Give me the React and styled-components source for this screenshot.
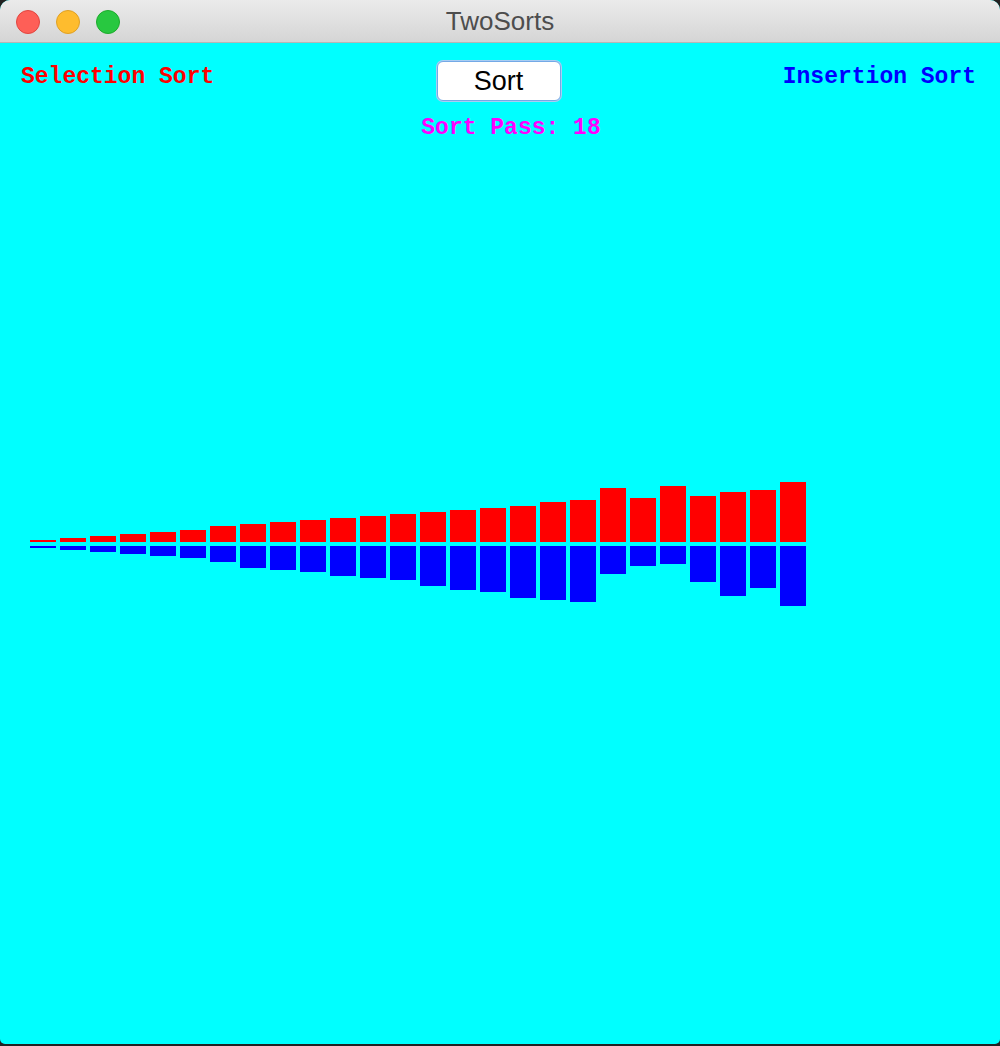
import React from "react";
import styled, { createGlobalStyle } from "styled-components";

const GlobalStyle = createGlobalStyle`
  html, body { margin: 0; padding: 0; background: #222222; }
  body { width: 1000px; height: 1046px; overflow: hidden; }
  #root { width: 1000px; height: 1046px; }
`;

const Window = styled.div`
  width: 1000px;
  height: 1044px;
  display: flex;
  flex-direction: column;
  border-radius: 10px 10px 5px 5px;
  overflow: hidden;
  background: #00ffff;
`;

const TitleBar = styled.div`
  height: 42px;
  border-bottom: 1px solid #b6b6b6;
  background: linear-gradient(#ebebeb, #d5d5d5);
  display: grid;
  grid-template-columns: 1fr auto 1fr;
  align-items: center;
`;

const Lights = styled.div`
  display: flex;
  gap: 16px;
  padding-left: 16px;
`;

const Light = styled.span`
  width: 24px;
  height: 24px;
  box-sizing: border-box;
  border-radius: 50%;
  background: ${(p) => p.$fill};
  border: 1px solid ${(p) => p.$edge};
`;

const Title = styled.div`
  font-family: "Liberation Sans", Arial, sans-serif;
  font-size: 26px;
  line-height: 42px;
  padding-bottom: 1px;
  color: #4d4d4d;
`;

const Content = styled.div`
  flex: 1;
  display: flex;
  flex-direction: column;
`;

const Header = styled.div`
  height: 100px;
  display: flex;
  flex-direction: column;
`;

const TopRow = styled.div`
  display: flex;
  justify-content: space-between;
  align-items: flex-start;
  padding: 18px 24px 0 21px;
`;

const Label = styled.div`
  font-family: "Liberation Mono", "Courier New", monospace;
  font-weight: bold;
  font-size: 23px;
  line-height: 23px;
  margin-top: 5px;
  color: ${(p) => p.$color};
  white-space: pre;
`;

const SortButton = styled.button`
  width: 124px;
  height: 40px;
  box-sizing: border-box;
  background: #ffffff;
  border: 1px solid #74a9e6;
  box-shadow: 0 0 0 1px #a9cdf3;
  border-radius: 6px;
  font-family: "Liberation Sans", Arial, sans-serif;
  font-size: 27px;
  color: #000000;
  padding: 0;
  line-height: 38px;
  cursor: pointer;
`;

const PassRow = styled.div`
  display: flex;
  justify-content: center;
  padding-left: 22px;
  margin-top: 11px;
`;

const Chart = styled.svg`
  display: block;
  flex: 1;
  width: 1000px;
`;

const red = [1, 2, 3, 4, 5, 6, 8, 9, 10, 11, 12, 13, 14, 15, 16, 17, 18, 20, 21, 27, 22, 28, 23, 25, 26, 30];
const blue = [1, 2, 3, 4, 5, 6, 8, 11, 12, 13, 15, 16, 17, 20, 22, 23, 26, 27, 28, 14, 10, 9, 18, 25, 21, 30];

const OFFSET = 143;

export default function App() {
  return (
    <>
      <GlobalStyle />
      <Window>
        <TitleBar>
          <Lights>
            <Light $fill="#fe5f57" $edge="#e1453f" />
            <Light $fill="#febc2e" $edge="#dfa024" />
            <Light $fill="#28c840" $edge="#1dab2c" />
          </Lights>
          <Title>TwoSorts</Title>
          <div />
        </TitleBar>
        <Content>
          <Header>
            <TopRow>
              <Label $color="#ff0000">Selection Sort</Label>
              <SortButton>Sort</SortButton>
              <Label $color="#0000ff">Insertion Sort</Label>
            </TopRow>
            <PassRow>
              <Label $color="#ff00ff">Sort Pass: 18</Label>
            </PassRow>
          </Header>
          <Chart viewBox="0 0 1000 901" height="901">
            {red.map((v, i) => (
              <rect key={"r" + i} x={30 + i * 30} y={542 - v * 2 - OFFSET} width={26} height={v * 2} fill="#ff0000" />
            ))}
            {blue.map((v, i) => (
              <rect key={"b" + i} x={30 + i * 30} y={546 - OFFSET} width={26} height={v * 2} fill="#0000ff" />
            ))}
          </Chart>
        </Content>
      </Window>
    </>
  );
}
